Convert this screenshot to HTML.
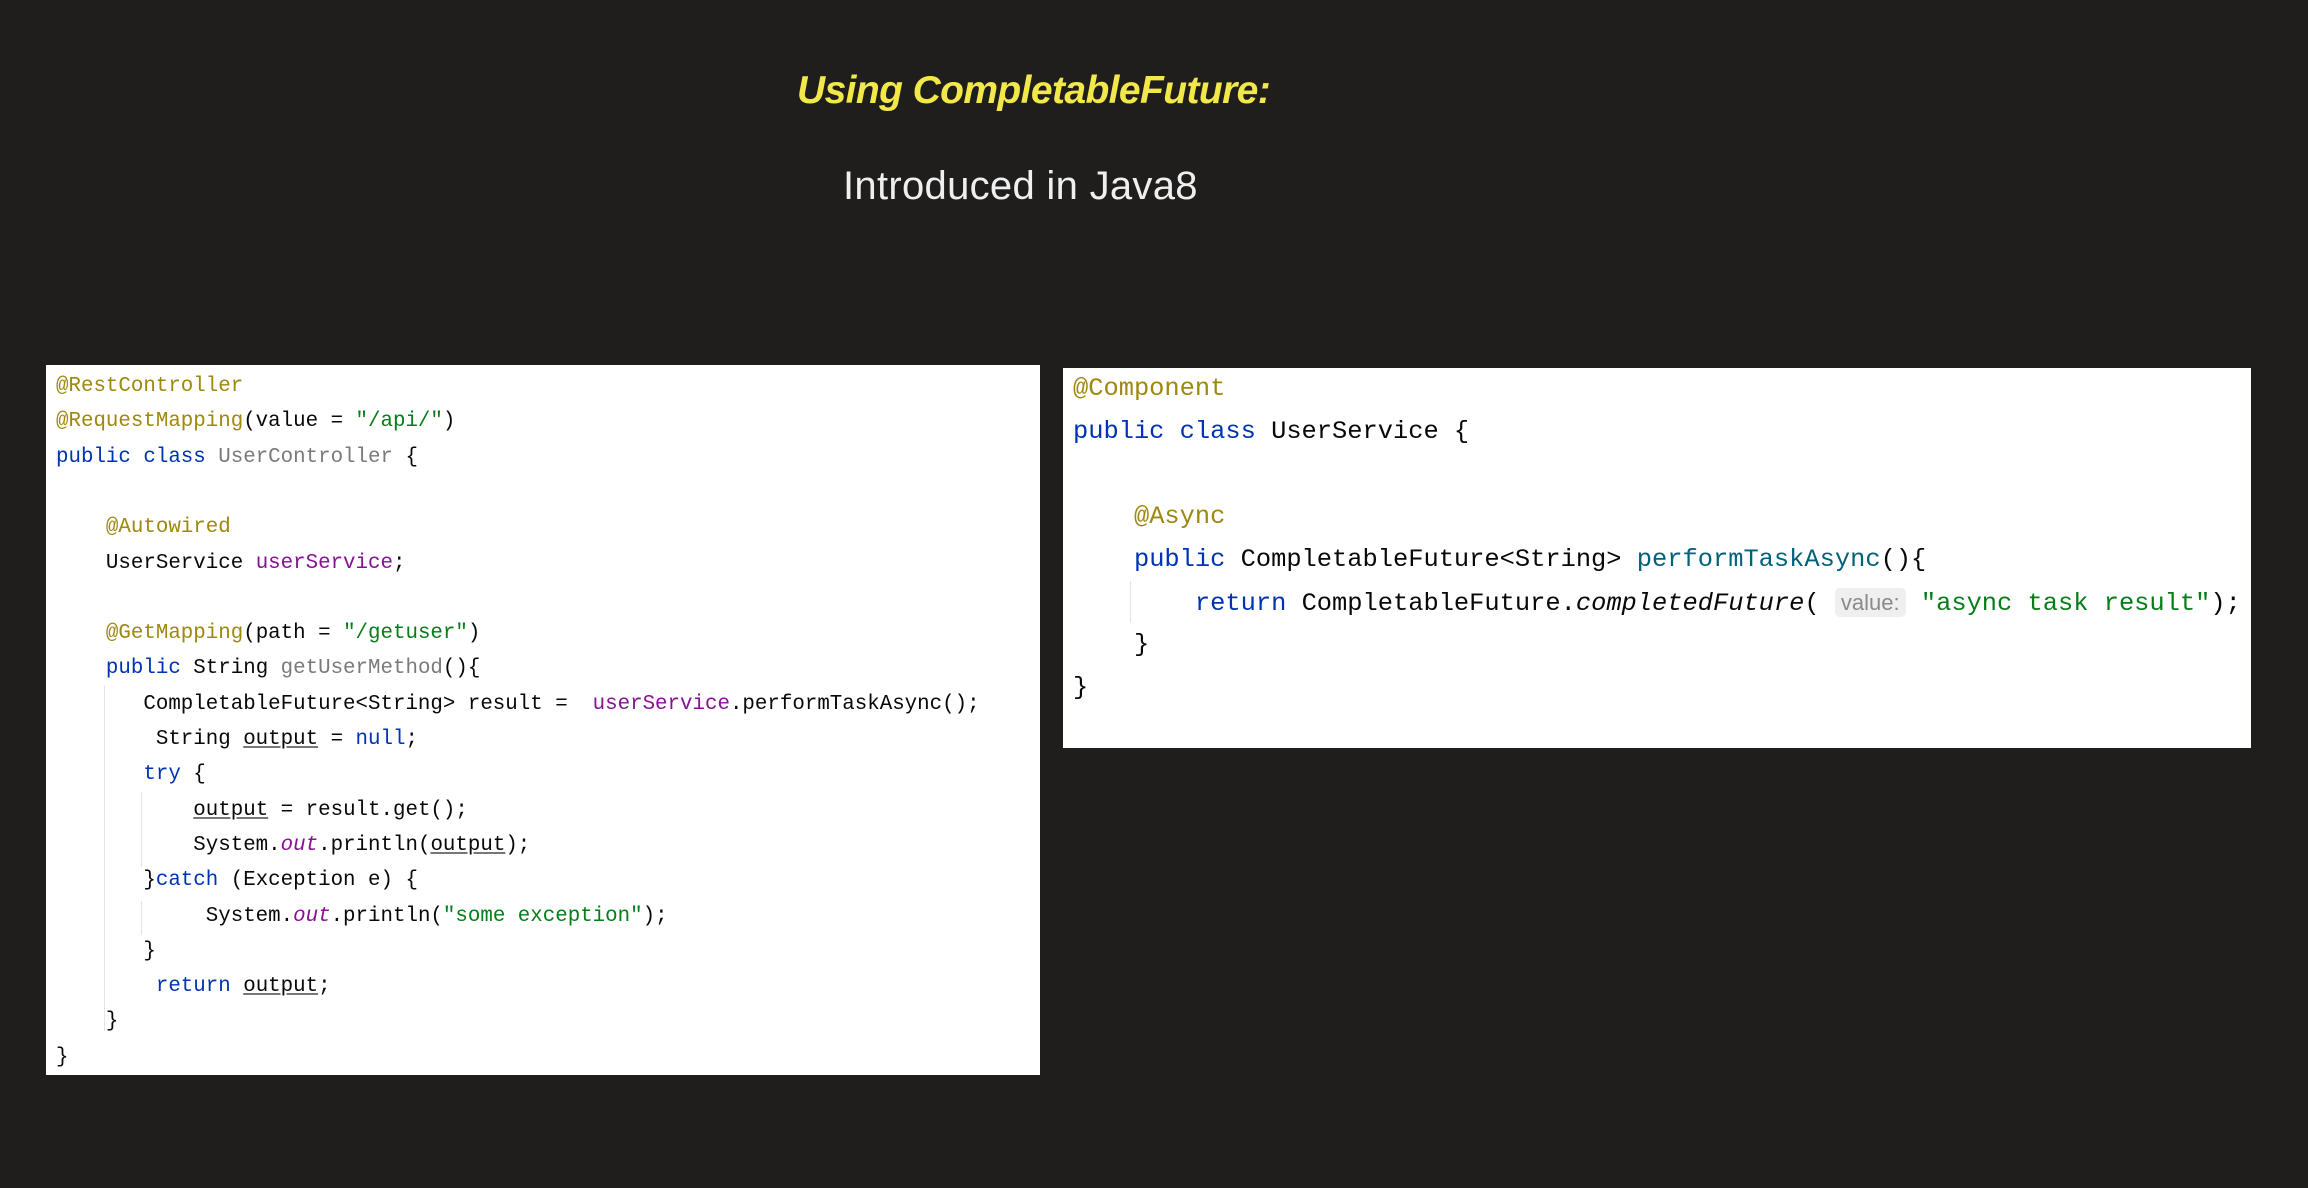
<!DOCTYPE html>
<html><head><meta charset="utf-8"><style>
body{margin:0;width:2308px;height:1188px;background:#1f1e1d;position:relative;overflow:hidden;font-family:"Liberation Sans",sans-serif}
.t1{position:absolute;left:797px;top:69px;font-size:39px;font-weight:bold;font-style:italic;color:#f3e84a;white-space:nowrap;letter-spacing:-0.6px}
.t2{position:absolute;left:843px;top:164px;font-size:40px;color:#efefef;white-space:nowrap;letter-spacing:0.3px}
.p{position:absolute;background:#fff}
.code{position:absolute;font-family:"Liberation Mono",monospace;white-space:pre;color:#080808}
.l{position:absolute;left:0}
.a{color:#9e880d}.k{color:#0033b3}.g{color:#7a7a7a}.f{color:#871094}.s{color:#067d17}.m{color:#00627a}.i{font-style:italic}.u{text-decoration:underline;text-decoration-color:#777}
.h{background:#efefef;color:#8a8a8a;border-radius:5px;font-family:"Liberation Sans",sans-serif;font-size:22px;padding:2px 6px}
.gl{position:absolute;width:1px;background:#e4e4e4}
</style></head><body>
<div class="t1">Using CompletableFuture:</div>
<div class="t2">Introduced in Java8</div>

<div class="p" style="left:46px;top:365px;width:994px;height:710px"></div>
<div class="gl" style="left:104px;top:686px;height:345px"></div>
<div class="gl" style="left:141px;top:792px;height:75px"></div>
<div class="gl" style="left:141px;top:901px;height:34px"></div>
<div class="code" style="left:56px;top:369px;font-size:20.8px;line-height:35.3px">
<div class="l" style="top:0"><span class="a">@RestController</span></div>
<div class="l" style="top:35.3px"><span class="a">@RequestMapping</span>(value = <span class="s">"/api/"</span>)</div>
<div class="l" style="top:70.6px"><span class="k">public class </span><span class="g">UserController</span> {</div>
<div class="l" style="top:141.2px">    <span class="a">@Autowired</span></div>
<div class="l" style="top:176.5px">    UserService <span class="f">userService</span>;</div>
<div class="l" style="top:247.1px">    <span class="a">@GetMapping</span>(path = <span class="s">"/getuser"</span>)</div>
<div class="l" style="top:282.4px">    <span class="k">public</span> String <span class="g">getUserMethod</span>(){</div>
<div class="l" style="top:317.7px">       CompletableFuture&lt;String&gt; result =  <span class="f">userService</span>.performTaskAsync();</div>
<div class="l" style="top:353px">        String <span class="u">output</span> = <span class="k">null</span>;</div>
<div class="l" style="top:388.3px">       <span class="k">try</span> {</div>
<div class="l" style="top:423.6px">           <span class="u">output</span> = result.get();</div>
<div class="l" style="top:458.9px">           System.<span class="f i">out</span>.println(<span class="u">output</span>);</div>
<div class="l" style="top:494.2px">       }<span class="k">catch</span> (Exception e) {</div>
<div class="l" style="top:529.5px">            System.<span class="f i">out</span>.println(<span class="s">"some exception"</span>);</div>
<div class="l" style="top:564.8px">       }</div>
<div class="l" style="top:600.1px">        <span class="k">return</span> <span class="u">output</span>;</div>
<div class="l" style="top:635.4px">    }</div>
<div class="l" style="top:670.7px">}</div>
</div>

<div class="p" style="left:1063px;top:368px;width:1188px;height:380px"></div>
<div class="gl" style="left:1130px;top:581px;height:42px"></div>
<div class="code" style="left:1073px;top:368px;font-size:25.4px;line-height:42.7px">
<div class="l" style="top:0"><span class="a">@Component</span></div>
<div class="l" style="top:42.7px"><span class="k">public class</span> UserService {</div>
<div class="l" style="top:128.1px">    <span class="a">@Async</span></div>
<div class="l" style="top:170.8px">    <span class="k">public</span> CompletableFuture&lt;String&gt; <span class="m">performTaskAsync</span>(){</div>
<div class="l" style="top:213.5px">        <span class="k">return</span> CompletableFuture.<span class="i">completedFuture</span>( <span class="h">value:</span> <span class="s">"async task result"</span>);</div>
<div class="l" style="top:256.2px">    }</div>
<div class="l" style="top:298.9px">}</div>
</div>
</body></html>
